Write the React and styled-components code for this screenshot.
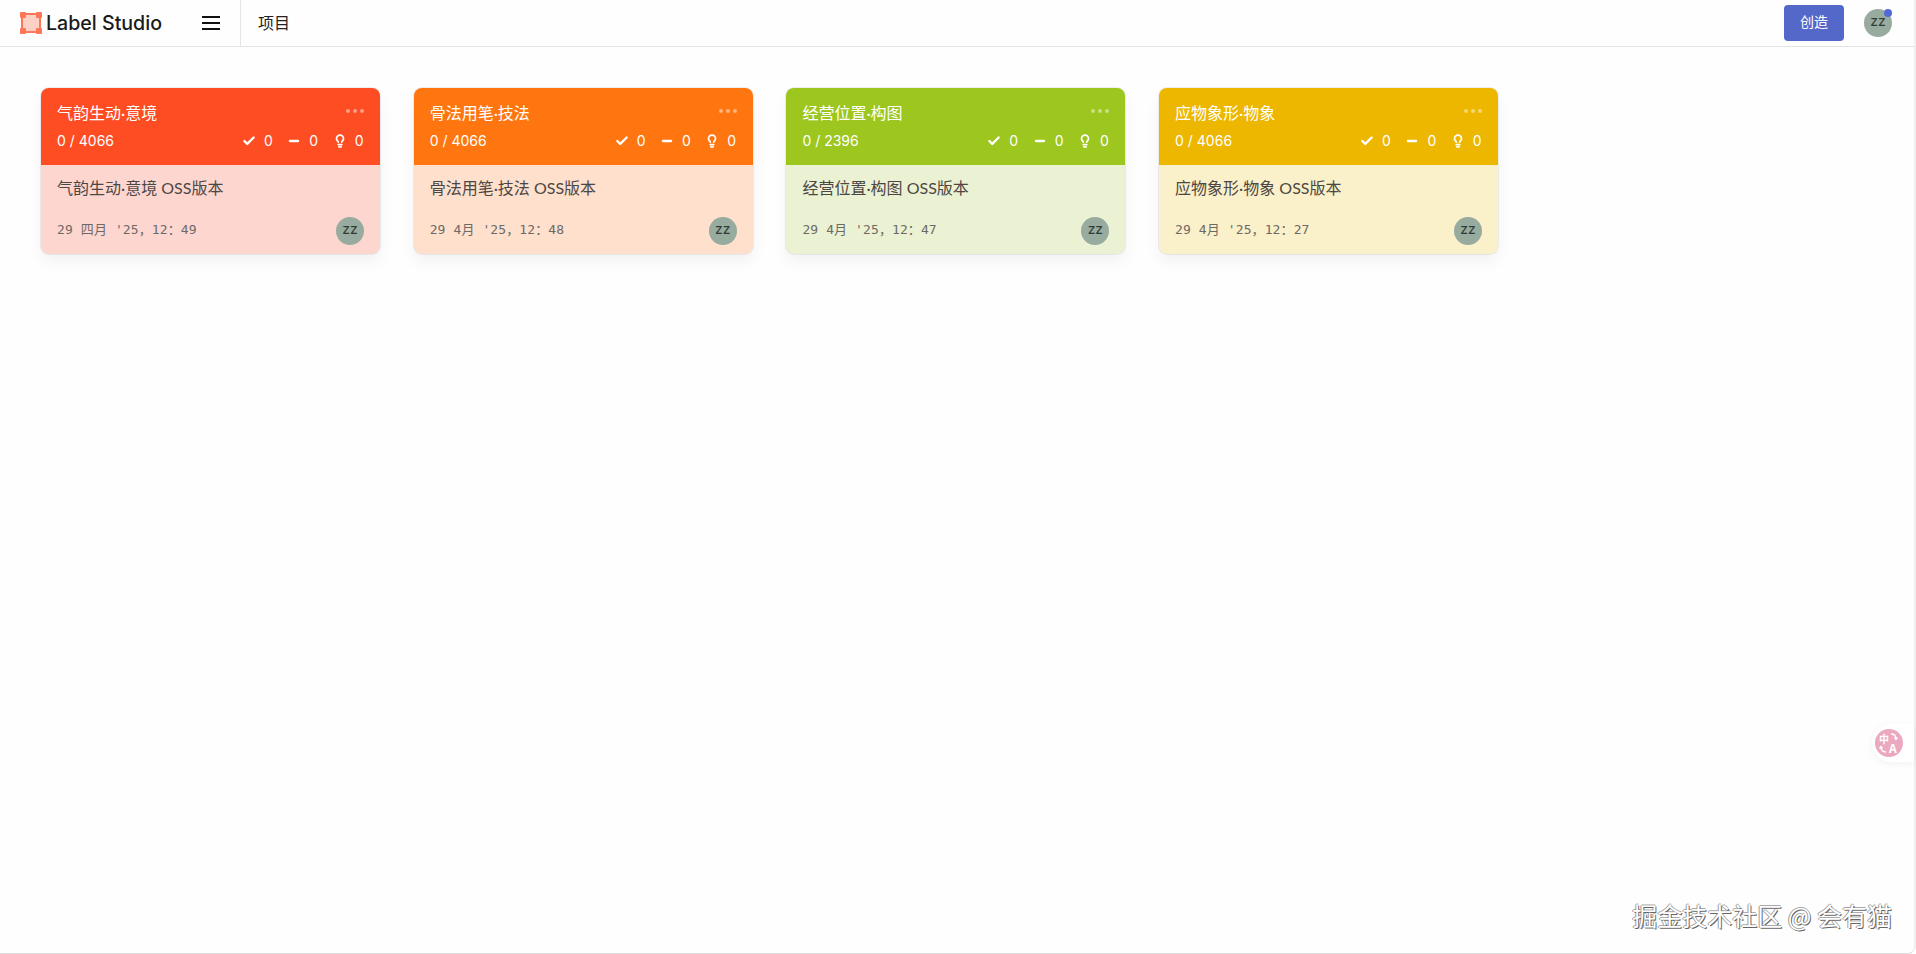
import React from 'react';
import styled, { createGlobalStyle } from 'styled-components';
import { Check, Minus, Lightbulb } from 'lucide-react';

const CJK = '"Noto Sans CJK SC", sans-serif';

const GlobalStyle = createGlobalStyle`
  html, body {
    margin: 0;
    padding: 0;
    height: 100%;
    background: #fff;
    overflow: hidden;
    font-family: Inter, ${CJK};
  }
`;

const Page = styled.div`
  position: relative;
  width: 1916px;
  height: 954px;
  display: flex;
  flex-direction: column;
  box-sizing: border-box;
  background: #fefefe;
  border-right: 2px solid #efefef;
  border-bottom: 1px solid #dcdcdc;
  border-bottom-right-radius: 8px;
`;

const Navbar = styled.header`
  height: 47px;
  flex: none;
  box-sizing: border-box;
  display: flex;
  align-items: center;
  border-bottom: 1px solid #e2e2e2;
`;

const Brand = styled.div`
  width: 186px;
  padding-left: 19px;
  box-sizing: border-box;
  display: flex;
  align-items: center;
  gap: 3px;
  font-size: 19.6px;
  font-weight: 500;
  color: #1a1a1a;
`;

const MenuButton = styled.div`
  width: 55px;
  height: 46px;
  display: flex;
  align-items: center;
  border-right: 1px solid #e6e6e6;
  box-sizing: border-box;
`;

const MenuLines = styled.span`
  display: block;
  width: 18px;
  height: 14px;
  margin-left: 16px;
  border-top: 2px solid #111;
  border-bottom: 2px solid #111;
  box-sizing: border-box;
  position: relative;
  &::after {
    content: '';
    position: absolute;
    left: 0;
    right: 0;
    top: 4px;
    height: 2px;
    background: #111;
  }
`;

const Crumb = styled.div`
  margin: -3px 0 0 17px;
  font-size: 16px;
  color: #222;
  font-family: ${CJK};
`;

const NavRight = styled.div`
  margin-left: auto;
  display: flex;
  align-items: center;
  gap: 20px;
  padding-right: 22px;
`;

const CreateButton = styled.button`
  width: 60px;
  height: 36px;
  border: none;
  border-radius: 4px;
  background: #5468c9;
  color: #fff;
  font-size: 14px;
  line-height: 32px;
  font-family: ${CJK};
  padding: 0 0 4px;
`;

const Avatar = styled.div`
  width: ${(p) => p.$size}px;
  height: ${(p) => p.$size}px;
  border-radius: 50%;
  background: #98ab9f;
  color: #2f3b36;
  font-size: 14px;
  line-height: 24px;
  padding-bottom: 4px;
  box-sizing: border-box;
  display: flex;
  align-items: center;
  justify-content: center;
  position: relative;
  flex: none;
`;

const NoticeDot = styled.span`
  position: absolute;
  top: 0;
  right: 0;
  width: 8px;
  height: 8px;
  border-radius: 50%;
  background: #5468d8;
`;

const Grid = styled.main`
  display: flex;
  gap: 33.7px;
  padding: 41px 0 0 41px;
  align-items: flex-start;
`;

const Card = styled.article`
  width: 339px;
  height: 166px;
  border-radius: 8px;
  overflow: hidden;
  display: flex;
  flex-direction: column;
  background: ${(p) => p.$tint};
  box-shadow: 0 0 0 1px rgba(0, 0, 0, 0.06), 0 8px 16px rgba(0, 0, 0, 0.05);
`;

const CardHead = styled.div`
  height: 77px;
  flex: none;
  background: ${(p) => p.$color};
  color: #fff;
  padding: 13px 16px 0;
  box-sizing: border-box;
`;

const TitleRow = styled.div`
  display: flex;
  justify-content: space-between;
  align-items: center;
  height: 22px;
`;

const CardTitle = styled.div`
  font-size: 16px;
  font-family: Lato, ${CJK};
`;

const Dots = styled.div`
  display: flex;
  gap: 3px;
  margin-top: -3px;
  span {
    width: 4px;
    height: 4px;
    border-radius: 50%;
    background: rgba(255, 255, 255, 0.45);
  }
`;

const StatsRow = styled.div`
  display: flex;
  justify-content: space-between;
  align-items: center;
  margin-top: 9px;
  font-size: 14px;
  font-family: Inter, sans-serif;
`;

const Stats = styled.div`
  display: flex;
  gap: 14px;
`;

const Stat = styled.span`
  display: flex;
  align-items: center;
  gap: 8px;
  letter-spacing: 0.5px;
`;

const CardBody = styled.div`
  flex: 1;
  padding: 12px 16px 9px;
  display: flex;
  flex-direction: column;
  justify-content: space-between;
`;

const Description = styled.div`
  font-size: 16px;
  line-height: 22px;
  color: #4d4744;
  font-family: Lato, ${CJK};
`;

const CardFoot = styled.div`
  display: flex;
  align-items: center;
  justify-content: space-between;
`;

const DateText = styled.div`
  font-size: 13px;
  line-height: 18px;
  margin-top: -3px;
  color: #6d6a66;
  letter-spacing: 0.1px;
  font-family: "DejaVu Sans Mono", ${CJK};
`;

const TranslateFab = styled.div`
  position: absolute;
  right: 0;
  top: 724px;
  width: 42px;
  height: 38px;
  background: #fff;
  border-radius: 19px 0 0 19px;
  box-shadow: 0 2px 8px rgba(0, 0, 0, 0.05);
  display: flex;
  align-items: center;
  padding-left: 3px;
  box-sizing: border-box;
`;

const TranslateBadge = styled.svg`
  width: 28px;
  height: 28px;
  display: block;
  text {
    fill: #fff;
    font-weight: 700;
    font-family: ${CJK};
  }
`;

const Watermark = styled.div`
  position: absolute;
  right: 22px;
  top: 898px;
  font-size: 25px;
  line-height: 34px;
  color: #fff;
  font-family: "Noto Sans CJK SC", sans-serif;
  text-shadow: 1px 1px 0 #666, -1px 0 0 #999, 0 -1px 0 #aaa;
`;

const projects = [
  { title: '气韵生动·意境', total: 4066, date: "29 四月 '25，12：49", color: '#ff4d23', tint: '#fed6d0' },
  { title: '骨法用笔·技法', total: 4066, date: "29 4月 '25，12：48", color: '#ff7610', tint: '#fee0cc' },
  { title: '经营位置·构图', total: 2396, date: "29 4月 '25，12：47", color: '#9dc61e', tint: '#ebf2d3' },
  { title: '应物象形·物象', total: 4066, date: "29 4月 '25，12：27", color: '#edb700', tint: '#faf0c9' },
];

const LogoMark = () => (
  <svg width="24" height="24" viewBox="0 0 24 24">
    <rect x="3" y="3" width="18" height="18" fill="#fdd0c5" stroke="#ff7557" strokeWidth="2" />
    <rect x="1" y="1" width="6" height="6" rx="1" fill="#ff7557" />
    <rect x="17" y="1" width="6" height="6" rx="1" fill="#ff7557" />
    <rect x="1" y="17" width="6" height="6" rx="1" fill="#ff7557" />
    <rect x="17" y="17" width="6" height="6" rx="1" fill="#ff7557" />
  </svg>
);

const TranslateMark = () => (
  <TranslateBadge viewBox="0 0 28 28">
    <circle cx="14" cy="14" r="14" fill="#eba9c1" />
    <text x="4" y="14" fontSize="10">中</text>
    <text x="14" y="24" fontSize="12">A</text>
    <path d="M16 5 C19 5 21 7 21 10 M19.5 8.5 L21 10.5 L22.5 8.5" fill="none" stroke="#fff" strokeWidth="1.3" />
    <path d="M11 23 C8 23 6 21 6 18 M4.5 19.5 L6 17.5 L7.5 19.5" fill="none" stroke="#fff" strokeWidth="1.3" />
  </TranslateBadge>
);

const ProjectCard = ({ project }) => (
  <Card $tint={project.tint}>
    <CardHead $color={project.color}>
      <TitleRow>
        <CardTitle>{project.title}</CardTitle>
        <Dots><span /><span /><span /></Dots>
      </TitleRow>
      <StatsRow>
        <span>0 / {project.total}</span>
        <Stats>
          <Stat><Check size={14} strokeWidth={4} />0</Stat>
          <Stat><Minus size={14} strokeWidth={4} />0</Stat>
          <Stat><Lightbulb size={14} strokeWidth={3} />0</Stat>
        </Stats>
      </StatsRow>
    </CardHead>
    <CardBody>
      <Description>{project.title} OSS版本</Description>
      <CardFoot>
        <DateText>{project.date}</DateText>
        <Avatar $size={28}>zz</Avatar>
      </CardFoot>
    </CardBody>
  </Card>
);

export default function App() {
  return (
    <Page>
      <GlobalStyle />
      <Navbar>
        <Brand>
          <LogoMark />
          Label Studio
        </Brand>
        <MenuButton><MenuLines /></MenuButton>
        <Crumb>项目</Crumb>
        <NavRight>
          <CreateButton>创造</CreateButton>
          <Avatar $size={28}>zz<NoticeDot /></Avatar>
        </NavRight>
      </Navbar>
      <Grid>
        {projects.map((p) => (
          <ProjectCard key={p.title} project={p} />
        ))}
      </Grid>
      <TranslateFab>
        <TranslateMark />
      </TranslateFab>
      <Watermark>掘金技术社区 @ 会有猫</Watermark>
    </Page>
  );
}
